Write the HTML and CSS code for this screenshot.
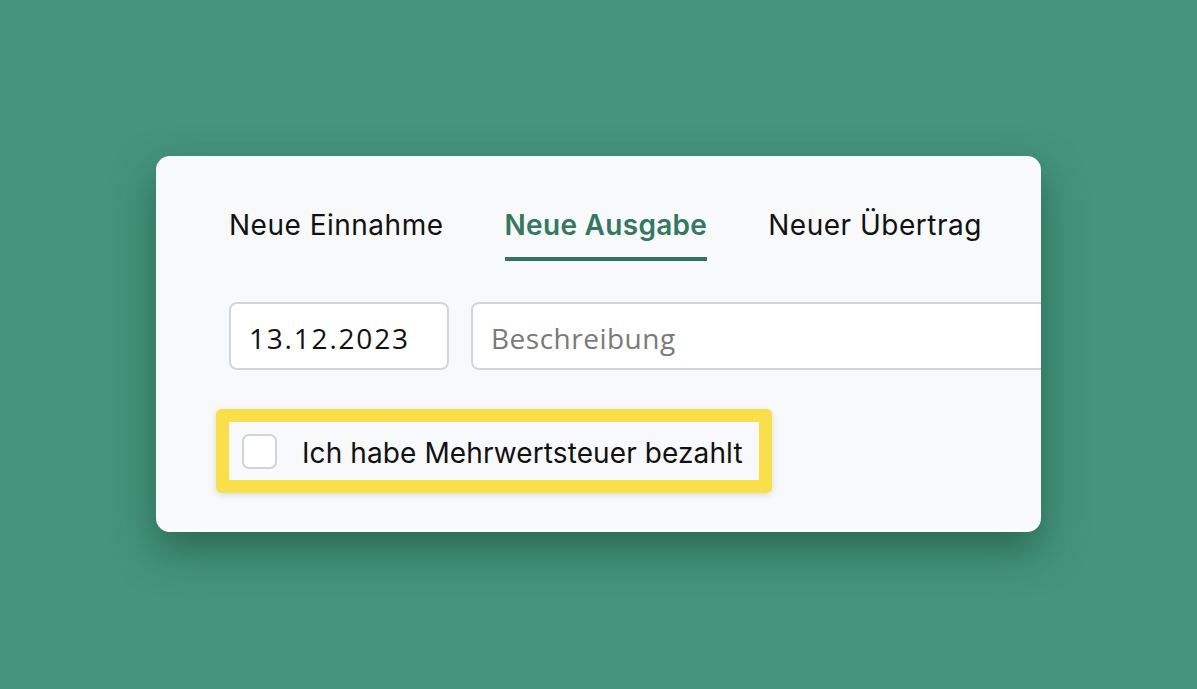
FILE: index.html
```html
<!DOCTYPE html>
<html lang="de">
<head>
    <meta charset="UTF-8">
    <meta name="viewport" content="width=device-width, initial-scale=1.0">
    <title>Neue Ausgabe</title>
    <link rel="stylesheet" href="styles.css">
</head>
<body>
  <div class="card">
    <div class="tabs">
      <span class="tab">Neue Einnahme</span>
      <span class="tab active">Neue Ausgabe</span>
      <span class="tab">Neuer Übertrag</span>
    </div>

    <div class="fields">
      <div class="field date">13.12.2023</div>
      <div class="field desc">Beschreibung</div>
    </div>

    <div class="highlight">
      <span class="box"></span>
      <span class="label">Ich habe Mehrwertsteuer bezahlt</span>
    </div>
  </div>
</body>
</html>
```

FILE: styles.css
```css
body{
  margin: 0;
  height: 689px;
  overflow: hidden;
  background-color: #44957b;
  font-family: Inter, "Noto Sans", sans-serif;
  color: #111;
}

.card{
  box-sizing: border-box;
  width: 885px;
  height: 376px;
  margin: 156px 0 0 156px;
  padding: 0 0 0 73px;
  overflow: hidden;
  border-radius: 14px;
  background-color: #f8f9fb;
  border-bottom: 3px solid #fff;
  box-shadow: 0 18px 40px rgba(20, 60, 45, 0.5);
}

.tabs{
  display: flex;
  gap: 61px;
  margin-top: 52px;
}

.tab{
  font-size: 28px;
  letter-spacing: 0.5px;
  line-height: 34px;
  padding-bottom: 15px;
  border-bottom: 4px solid transparent;
}

.tab.active{
  color: #36775f;
  font-weight: 600;
  letter-spacing: 0.3px;
  border-bottom-color: #36735e;
}

.fields{
  display: flex;
  gap: 22px;
  margin-top: 41px;
}

.field{
  box-sizing: border-box;
  height: 68px;
  display: flex;
  align-items: center;
  padding: 3px 0 0 18px;
  border: 2px solid #d2d5da;
  border-radius: 8px;
  background-color: #fff;
  font-family: "Open Sans", sans-serif;
  font-size: 28px;
  flex-shrink: 0;
}

.date{
  width: 220px;
  letter-spacing: 1.8px;
}

.desc{
  width: 700px;
  color: #7a7a7a;
  letter-spacing: 0.5px;
}

.highlight{
  display: inline-flex;
  align-items: center;
  box-sizing: border-box;
  height: 84px;
  margin: 39px 0 0 -13px;
  padding: 3px 16px 0 13px;
  border: 13px solid #f9e04b;
  border-radius: 5px;
  box-shadow: 0 2px 6px rgba(0, 0, 0, 0.12);
}

.box{
  width: 35px;
  height: 35px;
  box-sizing: border-box;
  border: 2px solid #cfd3d9;
  border-radius: 7px;
  background-color: #fff;
  margin: -3px 25px 0 0;
}

.label{
  font-size: 28px;
  letter-spacing: 0.1px;
}
```
